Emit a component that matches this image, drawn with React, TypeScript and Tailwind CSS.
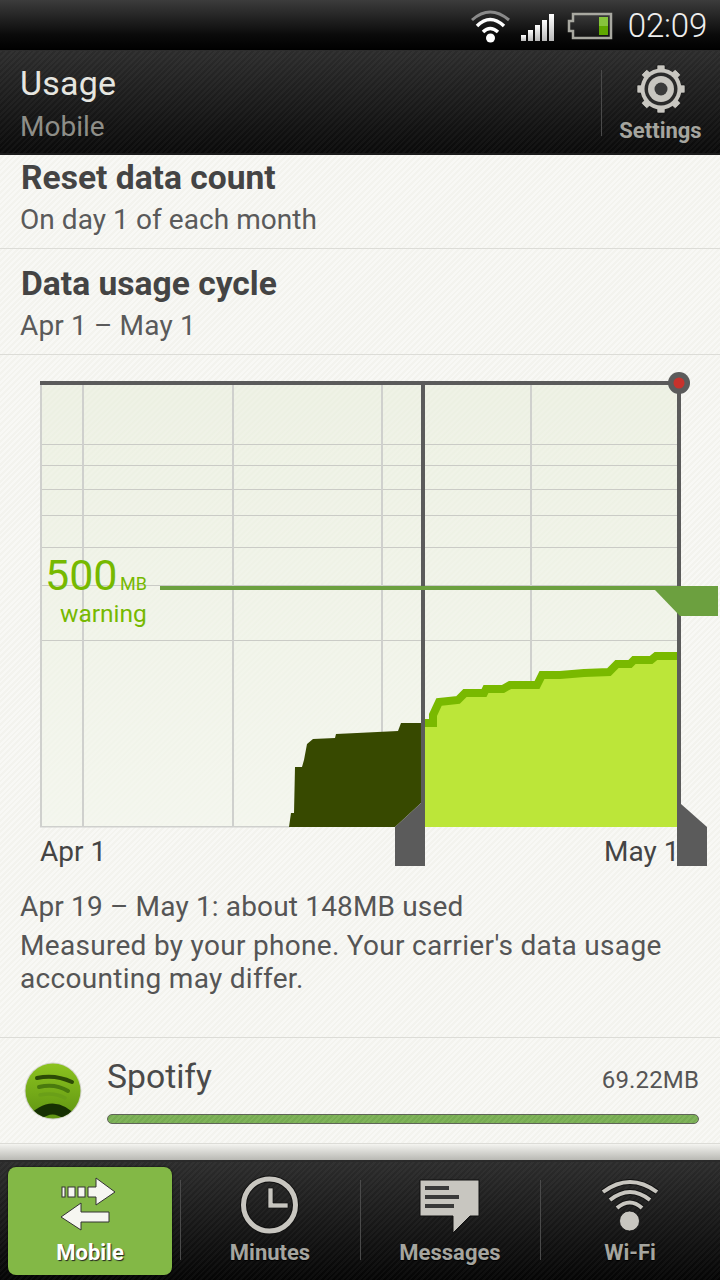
const stripesLight = "bg-[repeating-linear-gradient(135deg,#f8f8f5_0px,#f8f8f5_2px,#f3f3ee_2px,#f3f3ee_4px)]";

function Gear() {
  const teeth = [0, 45, 90, 135, 180, 225, 270, 315];
  return (
    <svg width="52" height="52" viewBox="-26 -26 52 52">
      {teeth.map((a) => (
        <rect key={a} x="-4" y="-24" width="8" height="7" rx="1" fill="#c8c6c0" stroke="#111" strokeWidth="0.6" transform={`rotate(${a})`} />
      ))}
      <circle r="20.500" fill="#c8c6c0" />
      <circle r="16.500" fill="#2a2a2a" />
      <circle r="13" fill="#c8c6c0" />
      <circle r="6.500" fill="#3a3a3a" />
    </svg>
  );
}

function StatusIcons() {
  return (
    <svg width="150" height="50" viewBox="470 0 150 50" className="shrink-0">
      <defs>
        <linearGradient id="bar" x1="0" y1="0" x2="0" y2="1">
          <stop offset="0" stopColor="#ffffff" />
          <stop offset="1" stopColor="#b8b8b8" />
        </linearGradient>
        <linearGradient id="bat" x1="0" y1="0" x2="0" y2="1">
          <stop offset="0" stopColor="#3a3a3a" />
          <stop offset="1" stopColor="#111111" />
        </linearGradient>
      </defs>
      <path d="M473 20 Q491 4 510 20" fill="none" stroke="#8a8a8a" strokeWidth="3" />
      <path d="M478 26 Q491 13 505 26" fill="none" stroke="#fff" strokeWidth="3.5" />
      <path d="M484 32 Q491 25 499 32" fill="none" stroke="#fff" strokeWidth="3.5" />
      <circle cx="491.500" cy="38" r="4.500" fill="#fff" />
      <rect x="522" y="35" width="5" height="6" fill="url(#bar)" />
      <rect x="529" y="30" width="5" height="11" fill="url(#bar)" />
      <rect x="536" y="25" width="5" height="16" fill="url(#bar)" />
      <rect x="543" y="20" width="5" height="21" fill="url(#bar)" />
      <rect x="550" y="14" width="5" height="27" fill="url(#bar)" />
      <path d="M574 14 H612 V38 H574 V31 H570 V21 H574 Z" fill="url(#bat)" stroke="#a8a8a0" strokeWidth="2.500" />
      <rect x="600" y="17" width="9" height="9" fill="#86c43c" />
      <rect x="600" y="26" width="9" height="9" fill="#5fa800" />
    </svg>
  );
}

function MobileIcon() {
  return (
    <svg width="64" height="60" viewBox="58 1175 64 60">
      <g fill="#f6f6f1" stroke="#333" strokeWidth="1">
        <rect x="62" y="1187" width="3" height="10" />
        <rect x="68" y="1187" width="7" height="10" />
        <rect x="78" y="1187" width="7" height="10" />
        <path d="M88 1187 H96 V1178 L115 1192 L96 1205 V1197 H88 Z" />
        <path d="M61 1217 L81 1203 V1212 H109 V1222 H81 V1230 Z" />
      </g>
    </svg>
  );
}

function ClockIcon() {
  return (
    <svg width="60" height="60" viewBox="240 1175 60 60">
      <circle cx="269.500" cy="1205" r="26" fill="none" stroke="#111" strokeWidth="7" />
      <circle cx="269.500" cy="1205" r="26" fill="none" stroke="#c8c6c0" strokeWidth="5" />
      <path d="M268 1188 H273 V1203 H288 V1208 H268 Z" fill="#c8c6c0" stroke="#111" strokeWidth="0.7" />
    </svg>
  );
}

function MessagesIcon() {
  return (
    <svg width="64" height="60" viewBox="418 1175 64 60">
      <path d="M420 1180 H479 V1216 H470 L453 1233 V1216 H420 Z" fill="#c8c6c0" stroke="#111" strokeWidth="1" />
      <rect x="425" y="1186" width="24" height="4" fill="#3a3a3a" />
      <rect x="425" y="1195" width="34" height="4" fill="#3a3a3a" />
      <rect x="425" y="1204" width="29" height="4" fill="#3a3a3a" />
    </svg>
  );
}

function WifiIcon() {
  return (
    <svg width="64" height="60" viewBox="598 1175 64 60">
      <g fill="none" stroke="#111" strokeWidth="6">
        <path d="M603 1192 Q630 1172 657 1192" />
        <path d="M610 1200 Q630 1184 650 1200" />
        <path d="M617 1208 Q630 1197 642 1208" />
      </g>
      <g fill="none" stroke="#c8c6c0" strokeWidth="4">
        <path d="M603 1192 Q630 1172 657 1192" />
        <path d="M610 1200 Q630 1184 650 1200" />
        <path d="M617 1208 Q630 1197 642 1208" />
      </g>
      <circle cx="629.500" cy="1221" r="10" fill="#c8c6c0" stroke="#111" strokeWidth="0.8" />
    </svg>
  );
}

function SpotifyIcon() {
  return (
    <svg width="58" height="58" viewBox="24 1063 58 58" className="shrink-0">
      <defs>
        <linearGradient id="sp" x1="0" y1="0" x2="0" y2="1">
          <stop offset="0" stopColor="#8cc31f" />
          <stop offset="1" stopColor="#5f9412" />
        </linearGradient>
        <clipPath id="spc">
          <circle cx="53" cy="1092" r="27.500" />
        </clipPath>
      </defs>
      <circle cx="53" cy="1092" r="28.500" fill="#bdbdb5" opacity="0.6" />
      <circle cx="53" cy="1092" r="27.500" fill="url(#sp)" />
      <g clipPath="url(#spc)" fill="none" strokeLinecap="round">
        <path d="M37 1079 Q55 1075 72 1083" stroke="#2c4a06" strokeWidth="4" />
        <path d="M39 1088 Q55 1084 68 1092" stroke="#4a7a0e" strokeWidth="4" />
        <path d="M40 1096 Q54 1093 65 1099" stroke="#6a9f18" strokeWidth="3.500" />
        <path d="M30 1124 Q52 1096 76 1124" stroke="#163003" strokeWidth="11" strokeLinecap="butt" />
      </g>
    </svg>
  );
}

const curve =
  "M425 723 H433 V715 L439 702 L458 700 L465 693 H484 L486 689 H503 L510 685 H537 L542 675 H560 L584 673 L609 672 L617 664 H630 L634 660 H651 L656 656 H677";

function Chart() {
  return (
    <svg width="720" height="530" viewBox="0 355 720 530" className="block">
      <defs>
        <pattern id="chartbg" width="4" height="4" patternUnits="userSpaceOnUse" patternTransform="rotate(45)">
          <rect width="4" height="4" fill="#eff2e6" />
          <rect width="2" height="4" fill="#ecf0e2" />
        </pattern>
        <linearGradient id="chartfade" x1="0" y1="0" x2="0" y2="1">
          <stop offset="0" stopColor="#ffffff" stopOpacity="0" />
          <stop offset="1" stopColor="#ffffff" stopOpacity="0.35" />
        </linearGradient>
      </defs>
      <rect x="41" y="385" width="637" height="442" fill="url(#chartbg)" />
      <rect x="41" y="385" width="637" height="442" fill="url(#chartfade)" />
      {[444, 465, 489, 515, 547, 585, 640].map((y) => (
        <rect key={y} x="42" y={y} width="635" height="1" fill="#cacbc6" />
      ))}
      {[82, 232, 381, 530].map((x) => (
        <rect key={x} x={x} y="385" width="2" height="442" fill="#cfd0cd" />
      ))}
      <rect x="40" y="385" width="2" height="442" fill="#cfd0cd" />
      <rect x="40" y="826" width="250" height="1.500" fill="#cfd0cd" />
      <path
        d="M289 827 L291 813 H294 L295 767 H302 L304 760 L307 744 L313 739 L335 738 L336 734 L357 733 L398 731 L401 723 H421 V803 L395 827 Z"
        fill="#374900"
      />
      <path d={`${curve} V827 H425 Z`} fill="#bce639" />
      <path d={curve} fill="none" stroke="#79b900" strokeWidth="8" />
      <rect x="40" y="381" width="640" height="4" fill="#5b5b5b" />
      <rect x="421" y="381" width="4" height="485" fill="#5b5b5b" />
      <rect x="677" y="381" width="4" height="485" fill="#5b5b5b" />
      <path d="M395 827 L421 803 H425 V866 H395 Z" fill="#5b5b5b" />
      <path d="M677 804 H681 L707 827 V866 H677 Z" fill="#5b5b5b" />
      <circle cx="679" cy="383" r="11" fill="#5b5b5b" />
      <circle cx="679" cy="383" r="5.500" fill="#c8322c" />
      <rect x="160" y="586" width="558" height="4" fill="#6ca03f" />
      <path d="M655 590 H718 V616 H680 Z" fill="#6ca03f" />
    </svg>
  );
}

function Tab({ label, icon, active, divider }: { label: string; icon: React.ReactNode; active?: boolean; divider?: boolean }) {
  return (
    <div className="relative flex w-[180px] justify-center">
      <div
        className={
          active
            ? "mt-[5px] flex h-[108px] w-[164px] flex-col items-center rounded-lg bg-[#83b846] shadow-[0_0_2px_#000]"
            : "mt-[5px] flex h-[108px] w-[164px] flex-col items-center"
        }
      >
        <div className="flex h-[68px] items-end">{icon}</div>
        <span
          className={
            active
              ? "mt-[5px] text-[22px] leading-[26px] font-bold text-white [text-shadow:1px_1px_1px_#222]"
              : "mt-[5px] text-[22px] leading-[26px] font-bold text-[#a5a59f] [text-shadow:0_1px_1px_#000]"
          }
        >
          {label}
        </span>
      </div>
      {divider && <div className="absolute right-[-1px] top-[18px] h-[80px] w-px bg-[#4a4a4a]" />}
    </div>
  );
}

export default function App() {
  return (
    <div className="flex h-[1280px] w-[720px] flex-col overflow-hidden font-['Roboto',sans-serif]">
      <div className="flex h-[51px] shrink-0 items-center justify-end border-b border-[#2e2e2e] bg-[linear-gradient(#3c3c3c,#0a0a0a_70%,#000)] pr-[13px]">
        <StatusIcons />
        <span className="ml-[9px] pt-[2px] text-[33px] leading-[50px] font-light tracking-[-0.2px] text-[#eeeeee]">02:09</span>
      </div>
      <div className="flex h-[104px] shrink-0 items-stretch justify-between border-b-2 border-[#1b1b1b] bg-[repeating-linear-gradient(135deg,#ffffff08_0px,#ffffff08_2px,#00000000_2px,#00000000_4px),linear-gradient(#2c2c2c,#0a0a0a)] pl-[20px]">
        <div className="flex flex-col pt-[12px]">
          <span className="text-[34px] leading-[40px] tracking-[0.2px] text-[#e6e6e0]">Usage</span>
          <span className="mt-[7px] text-[28px] leading-[34px] text-[#8e8e88]">Mobile</span>
        </div>
        <div className="relative flex w-[119px] flex-col items-center pt-[12px]">
          <div className="absolute left-0 top-[19px] h-[66px] w-px bg-[#4a4a4a]" />
          <Gear />
          <span className="mt-[3px] text-[22px] leading-[26px] font-bold text-[#a5a59f]">Settings</span>
        </div>
      </div>

      <div className={`flex min-h-0 flex-1 flex-col ${stripesLight}`}>
        <div className="flex h-[94px] shrink-0 flex-col border-b border-[#dcdcd7] px-[20px]">
          <span className="ml-[1px] mt-[3px] text-[33.600px] leading-[40px] font-bold text-[#444444]">Reset data count</span>
          <span className="mt-[6px] text-[28px] leading-[32px] tracking-[0.06px] text-[#5a5a5a]">On day 1 of each month</span>
        </div>
        <div className="flex h-[106px] shrink-0 flex-col border-b border-[#dcdcd7] px-[20px]">
          <span className="ml-[1px] mt-[15px] text-[33.600px] leading-[40px] font-bold text-[#444444]">Data usage cycle</span>
          <span className="mt-[6px] text-[28px] leading-[32px] tracking-[0.15px] text-[#5a5a5a]">Apr 1 – May 1</span>
        </div>
        <div className="relative h-[530px] shrink-0">
          <Chart />
          <span className="absolute left-[45px] top-[195px] text-[43px] leading-[50px] text-[#76b900]">500</span>
          <span className="absolute left-[120px] top-[219px] text-[18px] leading-[20px] text-[#76b900]">MB</span>
          <span className="absolute left-[60px] top-[244px] text-[24.500px] leading-[30px] text-[#76b900]">warning</span>
          <span className="absolute left-[40px] top-[480px] text-[28px] leading-[34px] text-[#444444]">Apr 1</span>
          <span className="absolute left-[604px] top-[480px] text-[28px] leading-[34px] text-[#444444]">May 1</span>
        </div>
        <div className="flex h-[153px] shrink-0 flex-col border-b border-[#dcdcd7] px-[20px]">
          <span className="mt-[6px] text-[28px] leading-[32px] tracking-[0.16px] text-[#555555]">Apr 19 – May 1: about 148MB used</span>
          <span className="mt-[6px] text-[28px] leading-[33px] tracking-[0.3px] text-[#555555]">Measured by your phone. Your carrier's data usage accounting may differ.</span>
        </div>
        <div className="flex h-[106px] shrink-0 items-center border-b border-[#dcdcd7] pl-[24px] pr-[21px]">
          <SpotifyIcon />
          <div className="ml-[25px] flex flex-1 flex-col">
            <div className="flex items-center justify-between">
              <span className="mb-[1px] -mt-[1px] text-[33.700px] leading-[40px] text-[#4a4a4a]">Spotify</span>
              <span className="mt-[5px] text-[24px] leading-[30px] tracking-[0.15px] text-[#555555]">69.22MB</span>
            </div>
            <div className="mt-[16px] h-[10px] rounded-full border border-[#5f6458] bg-[repeating-linear-gradient(135deg,#80b45a_0px,#80b45a_2px,#76ab52_2px,#76ab52_4px)]" />
          </div>
        </div>
        <div className="flex-1 bg-[linear-gradient(#f4f4f0,#b9b9b4)]" />
      </div>

      <div className="flex h-[120px] shrink-0 border-t-2 border-[#2a2a2a] bg-[repeating-linear-gradient(135deg,#ffffff08_0px,#ffffff08_2px,#00000000_2px,#00000000_4px),linear-gradient(#2c2c2c,#050505)]">
        <Tab label="Mobile" icon={<MobileIcon />} active divider />
        <Tab label="Minutes" icon={<ClockIcon />} divider />
        <Tab label="Messages" icon={<MessagesIcon />} divider />
        <Tab label="Wi-Fi" icon={<WifiIcon />} />
      </div>
    </div>
  );
}
